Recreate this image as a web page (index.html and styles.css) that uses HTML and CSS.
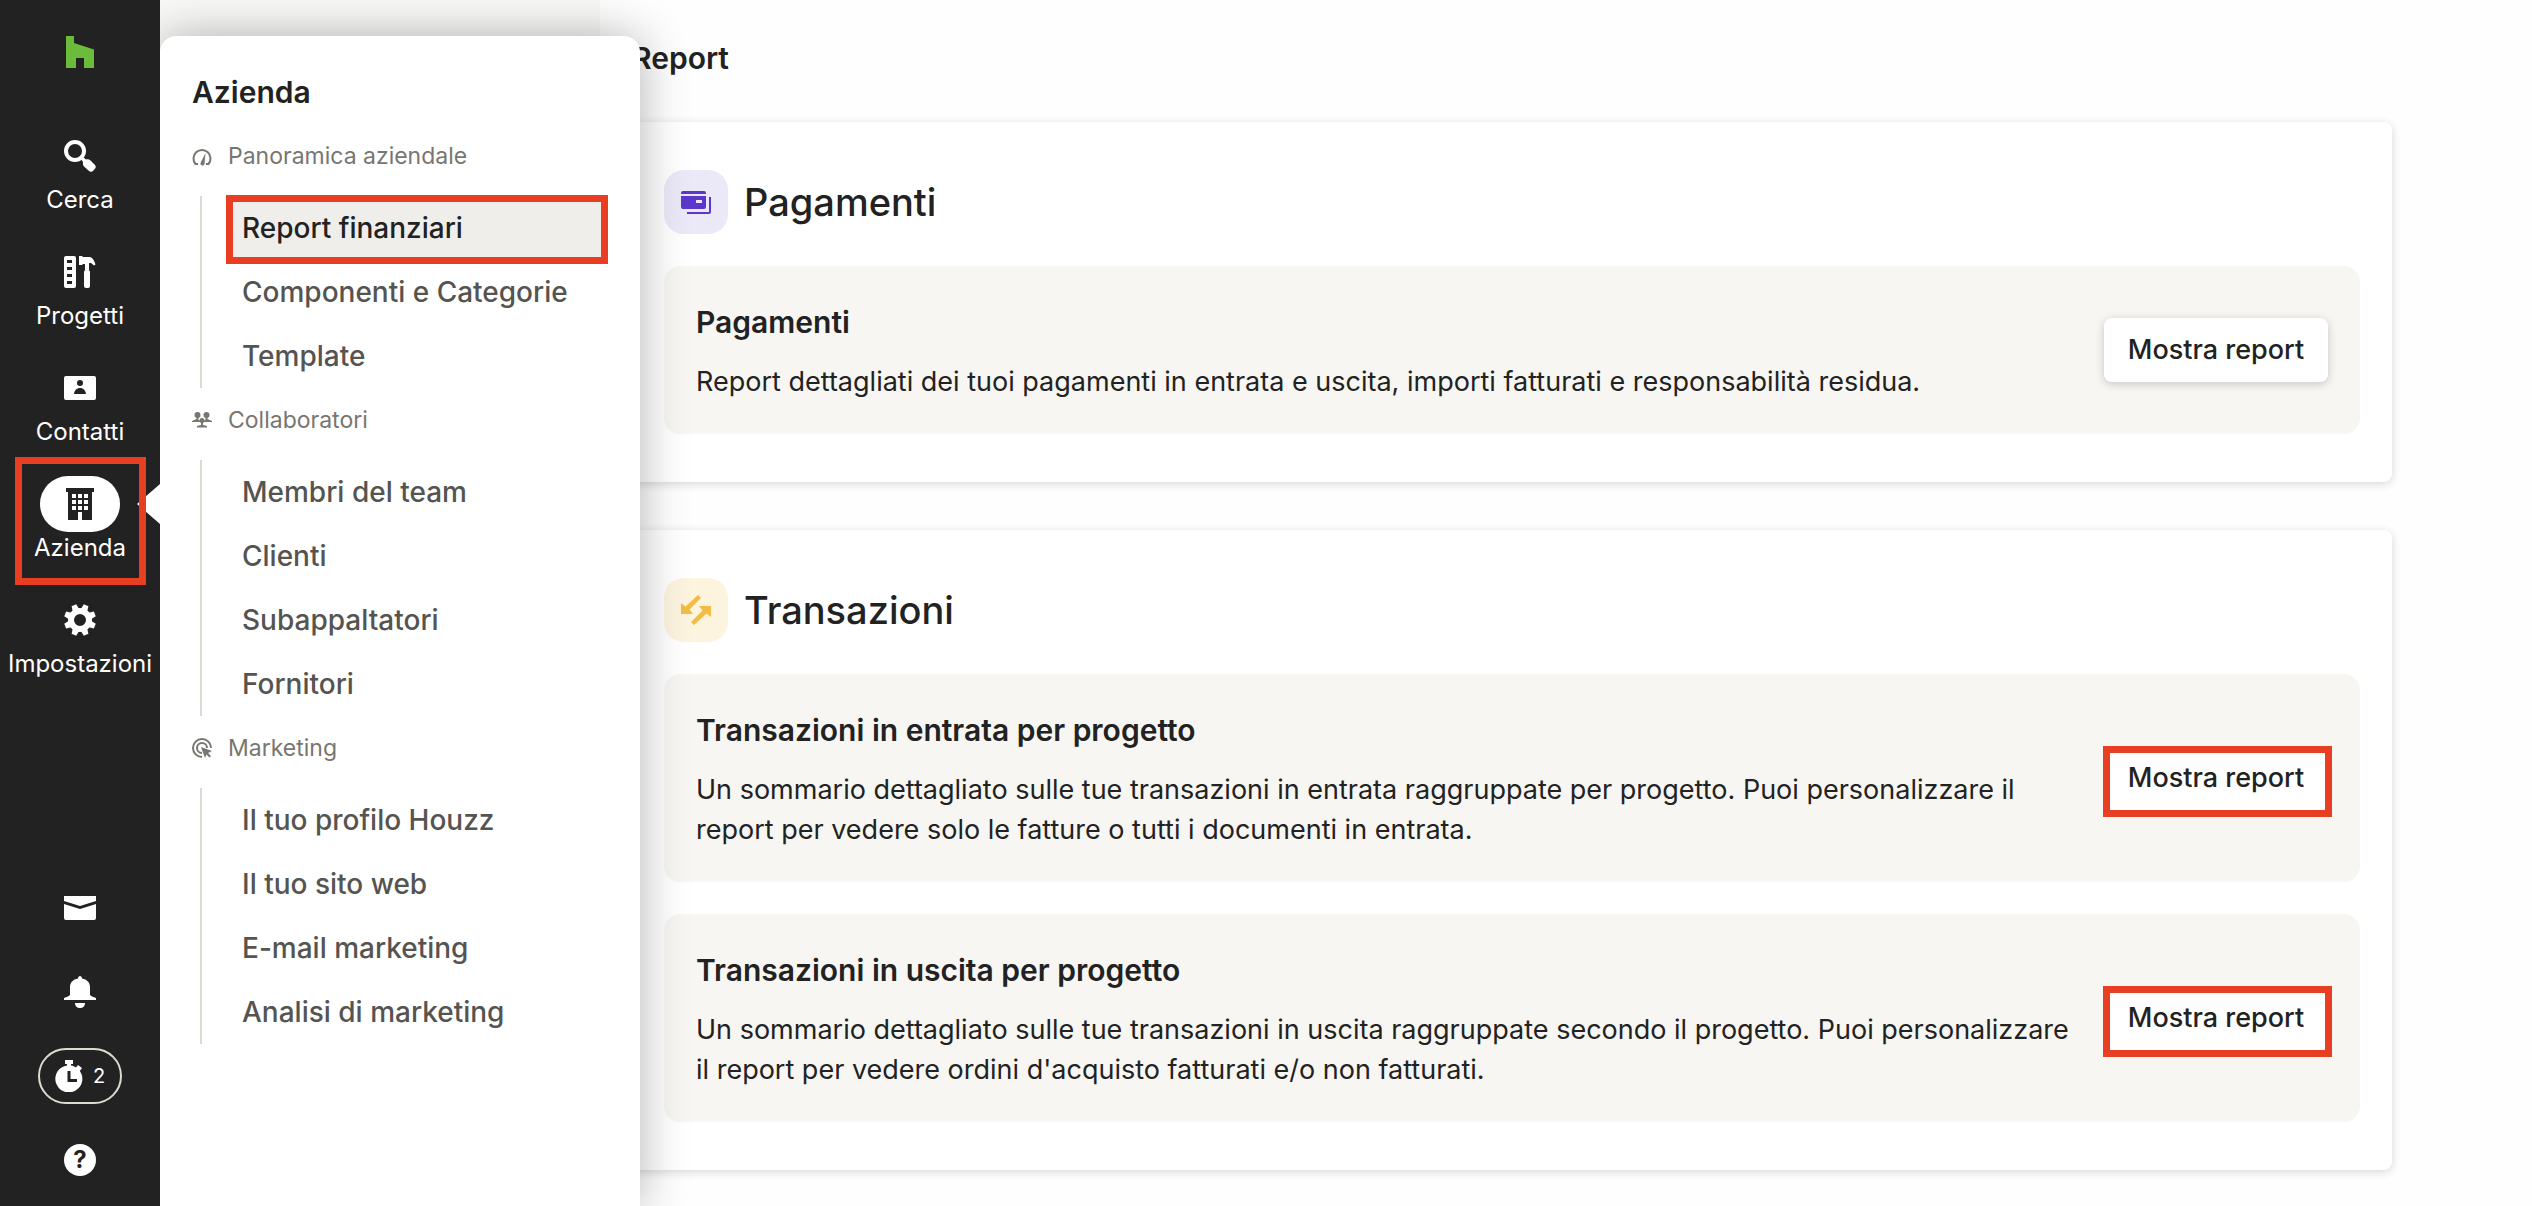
FILE: index.html
```html
<!DOCTYPE html>
<html lang="it">
<head>
  <meta charset="UTF-8">
  <meta name="viewport" content="width=device-width, initial-scale=1.0">
  <title>Report</title>
  <link rel="stylesheet" href="styles.css">
</head>
<body>
  <div class="layout">
    <aside class="sidebar">
      <a class="logo" href="#" aria-label="Houzz">
        <svg viewBox="0 0 28 32"><path d="M0 0h8v7l20 6.500V32H18V22h-8v10H0z"/></svg>
      </a>
      <nav class="nav">
        <a class="nav-item" href="#">
          <span class="nav-icon">
            <svg viewBox="0 0 32 32">
              <circle class="line" cx="11" cy="11" r="9" stroke-width="4"/>
              <path d="M17 19l2-2 3 2.500c2-.5 3.500 0 5 1.500l3.500 3.500c1 1 1.500 2 1 3.500l-2.500 3c-1.500 1-3 1-4.500-.5L20 26.500c-1-1.500-1.300-2.500-1-4.500z"/>
            </svg>
          </span>
          <span class="nav-label">Cerca</span>
        </a>
        <a class="nav-item" href="#">
          <span class="nav-icon">
            <svg viewBox="0 0 32 32">
              <path fill-rule="evenodd" d="M2 0h8a2 2 0 0 1 2 2v28a2 2 0 0 1-2 2H2a2 2 0 0 1-2-2V2a2 2 0 0 1 2-2zM3 4v3h5V4zM3 11v3h5v-3zM3 18v3h5v-3zM3 25v3h5v-3z"/>
              <path d="M15 0h3l1 1h6c3 0 5 2.500 6.500 7.500L30 9.500 27 7h-2v7h-4V8h-2l-1 1h-3z"/>
              <rect x="20" y="14" width="6" height="18" rx="2"/>
            </svg>
          </span>
          <span class="nav-label">Progetti</span>
        </a>
        <a class="nav-item" href="#">
          <span class="nav-icon">
            <svg viewBox="0 0 32 32">
              <path fill-rule="evenodd" d="M2 4h28a2 2 0 0 1 2 2v20a2 2 0 0 1-2 2H2a2 2 0 0 1-2-2V6a2 2 0 0 1 2-2zM16 8a3 3 0 1 0 0 6 3 3 0 0 0 0-6zM10 22h12c-.5-4-3-6-6-6s-5.500 2-6 6z"/>
            </svg>
          </span>
          <span class="nav-label">Contatti</span>
        </a>
        <a class="nav-item active" href="#">
          <span class="nav-icon">
            <svg viewBox="0 0 32 32">
              <path fill-rule="evenodd" d="M2 0h28v4h-2v28H18v-8h-4v8H4V4H2zM8 6v4h4V6zM14 6v4h4V6zM20 6v4h4V6zM8 12v4h4v-4zM14 12v4h4v-4zM20 12v4h4v-4zM8 18v4h4v-4zM14 18v4h4v-4zM20 18v4h4v-4z"/>
            </svg>
          </span>
          <span class="nav-label">Azienda</span>
        </a>
        <a class="nav-item" href="#">
          <span class="nav-icon">
            <svg viewBox="0 0 32 32">
              <circle class="line" cx="16" cy="16" r="9" stroke-width="6"/>
              <g id="teeth">
                <path d="M12.500 6l1-6h5l1 6z" transform="rotate(22.500 16 16)"/>
                <path d="M12.500 6l1-6h5l1 6z" transform="rotate(67.500 16 16)"/>
                <path d="M12.500 6l1-6h5l1 6z" transform="rotate(112.500 16 16)"/>
                <path d="M12.500 6l1-6h5l1 6z" transform="rotate(157.500 16 16)"/>
              </g>
              <use href="#teeth" transform="rotate(180 16 16)"/>
            </svg>
          </span>
          <span class="nav-label">Impostazioni</span>
        </a>
      </nav>
      <div class="tools">
        <button class="tool" type="button" aria-label="Messaggi">
          <svg viewBox="0 0 32 32">
            <path d="M0 4h32v5l-16 5L0 9zM0 12l16 5 16-5v14a2 2 0 0 1-2 2H2a2 2 0 0 1-2-2z"/>
          </svg>
        </button>
        <button class="tool" type="button" aria-label="Notifiche">
          <svg viewBox="0 0 32 32">
            <path d="M16 0c1 0 2 1 2 2.500 5 1 8 4 8 8.500v8l2 1.500 4 1.500v2H0v-2l4-1.500L6 19v-8c0-4.500 3-7.500 8-8.500C14 1 15 0 16 0zM11 27h10c0 3-2 5-5 5s-5-2-5-5z"/>
          </svg>
        </button>
        <button class="tool timer" type="button" aria-label="Timer">
          <svg viewBox="0 0 28 32">
            <path fill-rule="evenodd" d="M10 0h8v4h-2v1.500c2 .3 3.500 1 5 2L23 5l4 3-2.200 3A13.500 13.500 0 1 1 12 5.500V4h-2zM12.500 11v11H22v-3h-6.500v-8z"/>
          </svg>
          <span>2</span>
        </button>
        <button class="tool" type="button" aria-label="Aiuto">
          <span class="help">?</span>
        </button>
      </div>
    </aside>

    <div class="flyout">
      <h2 class="flyout-title">Azienda</h2>
      <section>
        <h3 class="group-title">
          <svg viewBox="0 0 20 20">
            <path class="line" d="M6 18H3.500A8.500 8.500 0 1 1 16.500 18H14" stroke-width="2"/>
            <path d="M13.500 7l-1 11a2 2 0 0 1-4-1z"/>
          </svg>
          Panoramica aziendale
        </h3>
        <ul class="menu">
          <li><a class="current" href="#">Report finanziari</a></li>
          <li><a href="#">Componenti e Categorie</a></li>
          <li><a href="#">Template</a></li>
        </ul>
      </section>
      <section>
        <h3 class="group-title">
          <svg viewBox="0 0 20 20">
            <g id="person"><circle cx="5.500" cy="5" r="3"/><path d="M4.500 7h2v3l2 1v1H0v-1l4.500-2z"/></g>
            <use href="#person" transform="matrix(-1 0 0 1 20 0)"/>
            <circle cx="10" cy="10.500" r="2.500"/>
            <path d="M9 12h2v3l4 1v1.500H5V16l4-1z"/>
          </svg>
          Collaboratori
        </h3>
        <ul class="menu">
          <li><a href="#">Membri del team</a></li>
          <li><a href="#">Clienti</a></li>
          <li><a href="#">Subappaltatori</a></li>
          <li><a href="#">Fornitori</a></li>
        </ul>
      </section>
      <section>
        <h3 class="group-title">
          <svg viewBox="0 0 20 20">
            <path class="line" d="M19 10a9 9 0 1 0-9 9M15 10a5 5 0 1 0-5 5" stroke-width="2"/>
            <path d="M9 9l11 4-4 2 3 3-1.500 1.500-3-3L13 20z"/>
          </svg>
          Marketing
        </h3>
        <ul class="menu">
          <li><a href="#">Il tuo profilo Houzz</a></li>
          <li><a href="#">Il tuo sito web</a></li>
          <li><a href="#">E-mail marketing</a></li>
          <li><a href="#">Analisi di marketing</a></li>
        </ul>
      </section>
    </div>

    <div class="subnav"></div>

    <main class="content">
      <h1 class="page-title">Report</h1>

      <section class="card">
        <header class="card-header">
          <span class="card-icon purple">
            <svg viewBox="0 0 32 32">
              <path d="M3 5h21a2 2 0 0 1 2 2v1H1V7a2 2 0 0 1 2-2z"/>
              <path fill-rule="evenodd" d="M1 10h25v11a2 2 0 0 1-2 2H3a2 2 0 0 1-2-2zM16 14v3h6v-3z"/>
              <path d="M29 11h2v15a2 2 0 0 1-2 2H7v-2h22z"/>
            </svg>
          </span>
          <h2>Pagamenti</h2>
        </header>
        <div class="report">
          <div class="report-text">
            <h3>Pagamenti</h3>
            <p>Report dettagliati dei tuoi pagamenti in entrata e uscita, importi fatturati e responsabilità residua.</p>
          </div>
          <button class="btn" type="button">Mostra report</button>
        </div>
      </section>

      <section class="card">
        <header class="card-header">
          <span class="card-icon yellow">
            <svg viewBox="0 0 32 32">
              <path d="M18 1l3 3L9.500 15.500 13 20H1V9l4.500 3.500zM14 31l-3-3 11.500-11.500L19 12h12v11l-4.500-3.500z"/>
            </svg>
          </span>
          <h2>Transazioni</h2>
        </header>
        <div class="report">
          <div class="report-text">
            <h3>Transazioni in entrata per progetto</h3>
            <p>Un sommario dettagliato sulle tue transazioni in entrata raggruppate per progetto. Puoi personalizzare il report per vedere solo le fatture o tutti i documenti in entrata.</p>
          </div>
          <button class="btn marked" type="button">Mostra report</button>
        </div>
        <div class="report">
          <div class="report-text">
            <h3>Transazioni in uscita per progetto</h3>
            <p>Un sommario dettagliato sulle tue transazioni in uscita raggruppate secondo il progetto. Puoi personalizzare il report per vedere ordini d'acquisto fatturati e/o non fatturati.</p>
          </div>
          <button class="btn marked" type="button">Mostra report</button>
        </div>
      </section>
    </main>
  </div>
</body>
</html>
```
FILE: styles.css
```css
* {
  box-sizing: border-box;
  margin: 0;
  padding: 0;
}
body {
  font-family: Inter, "Liberation Sans", sans-serif;
  font-size: 27px;
  line-height: 40px;
  color: #222;
  background-color: #fefefe;
}
a {
  color: inherit;
  text-decoration: none;
}
ul {
  list-style: none;
}
button {
  font: inherit;
  color: inherit;
  border: none;
  background: none;
  cursor: pointer;
}
svg {
  display: block;
  fill: currentColor;
}
.line {
  fill: none;
  stroke: currentColor;
}
.layout {
  position: relative;
  display: flex;
  height: 100vh;
  overflow: hidden;
}

/* sidebar */
.sidebar {
  position: relative;
  z-index: 2;
  display: flex;
  flex-direction: column;
  align-items: center;
  flex: none;
  width: 160px;
  padding: 36px 0 18px;
  color: #fff;
  background-color: #222;
}
.logo {
  color: #6bbc3b;
}
.logo svg {
  width: 28px;
  height: 32px;
}
.nav {
  display: flex;
  flex-direction: column;
  gap: 28px;
  width: 100%;
  margin-top: 60px;
}
.nav-item {
  position: relative;
  display: flex;
  flex-direction: column;
  align-items: center;
}
.nav-icon {
  display: flex;
  align-items: center;
  justify-content: center;
  width: 80px;
  height: 56px;
  border-radius: 28px;
}
.nav-icon svg {
  width: 32px;
  height: 32px;
}
.nav-label {
  font-size: 24px;
  line-height: 32px;
}
.active .nav-icon {
  color: #222;
  background-color: #fff;
}
/* arrow that points from the open menu to the active item */
.active::before {
  content: "";
  position: absolute;
  top: 8px;
  right: 0;
  border: solid transparent;
  border-width: 20px 23px 20px 0;
  border-right-color: #fff;
}
.active::after {
  content: "";
  position: absolute;
  inset: -19px 14px -21px 15px;
  border: 7px solid #e83f22;
}
.tools {
  display: flex;
  flex-direction: column;
  align-items: center;
  gap: 28px;
  margin-top: auto;
}
.tool {
  display: flex;
  align-items: center;
  justify-content: center;
  height: 56px;
}
.tool svg {
  width: 32px;
  height: 32px;
}
.timer {
  gap: 10px;
  width: 84px;
  border: 2px solid #dcdbd2;
  border-radius: 28px;
  font-size: 20px;
}
.timer svg {
  width: 28px;
}
.help {
  width: 32px;
  height: 32px;
  border-radius: 50%;
  font-size: 24px;
  font-weight: 700;
  line-height: 32px;
  color: #222;
  background-color: #fff;
}

/* menu that opens over the page */
.flyout {
  position: absolute;
  z-index: 1;
  top: 36px;
  bottom: 0;
  left: 160px;
  width: 480px;
  padding: 36px 32px 0;
  border-radius: 16px 16px 0 0;
  background-color: #fff;
  box-shadow: 0 0 48px rgba(0, 0, 0, 0.3);
}
.flyout-title {
  margin-bottom: 12px;
  font-size: 30px;
  font-weight: 600;
}
.group-title {
  display: flex;
  align-items: center;
  gap: 16px;
  height: 64px;
  font-size: 23px;
  font-weight: 400;
  color: #777670;
}
.group-title svg {
  width: 20px;
  height: 20px;
}
.menu {
  margin: 8px 0 0 8px;
  padding-left: 24px;
  border-left: 2px solid #dcdbd2;
}
.menu a {
  display: block;
  padding: 0 16px;
  font-size: 28px;
  font-weight: 500;
  line-height: 64px;
  color: #555450;
}
.menu .current {
  position: relative;
  color: #222;
  background-color: #f0eeea;
}
.current::after {
  content: "";
  position: absolute;
  inset: -1px 0 -4px;
  border: 7px solid #e83f22;
}

/* page */
.subnav {
  flex: none;
  width: 440px;
  background-color: #f9f9f7;
}
.content {
  flex: 1;
  padding: 38px 32px;
}
.page-title {
  margin-bottom: 44px;
  font-size: 30px;
  font-weight: 600;
}
.card {
  display: flex;
  flex-direction: column;
  gap: 32px;
  max-width: 1760px;
  margin-bottom: 48px;
  padding: 48px 32px;
  border-radius: 8px;
  background-color: #fff;
  box-shadow: 0 2px 10px rgba(0, 0, 0, 0.16);
}
.card-header {
  display: flex;
  align-items: center;
  gap: 16px;
}
.card-header h2 {
  font-size: 38px;
  font-weight: 500;
}
.card-icon {
  display: flex;
  align-items: center;
  justify-content: center;
  width: 64px;
  height: 64px;
  border-radius: 20px;
}
.card-icon svg {
  width: 32px;
  height: 32px;
}
.purple {
  color: #5b37cd;
  background-color: #ebe8f7;
}
.yellow {
  color: #f2bc45;
  background-color: #fcf4df;
}
.report {
  display: flex;
  align-items: center;
  gap: 32px;
  padding: 32px;
  border-radius: 16px;
  background-color: #f7f6f2;
}
.report-text {
  flex: 1;
}
.report h3 {
  margin-bottom: 16px;
  font-size: 30px;
  font-weight: 600;
  line-height: 48px;
}
.btn {
  position: relative;
  flex: none;
  width: 224px;
  height: 64px;
  border-radius: 8px;
  font-weight: 500;
  background-color: #fff;
  box-shadow: 0 2px 10px rgba(0, 0, 0, 0.2);
}
.marked {
  box-shadow: none;
}
.marked::after {
  content: "";
  position: absolute;
  inset: 0 -4px -7px -1px;
  border: 7px solid #e83f22;
}
```
